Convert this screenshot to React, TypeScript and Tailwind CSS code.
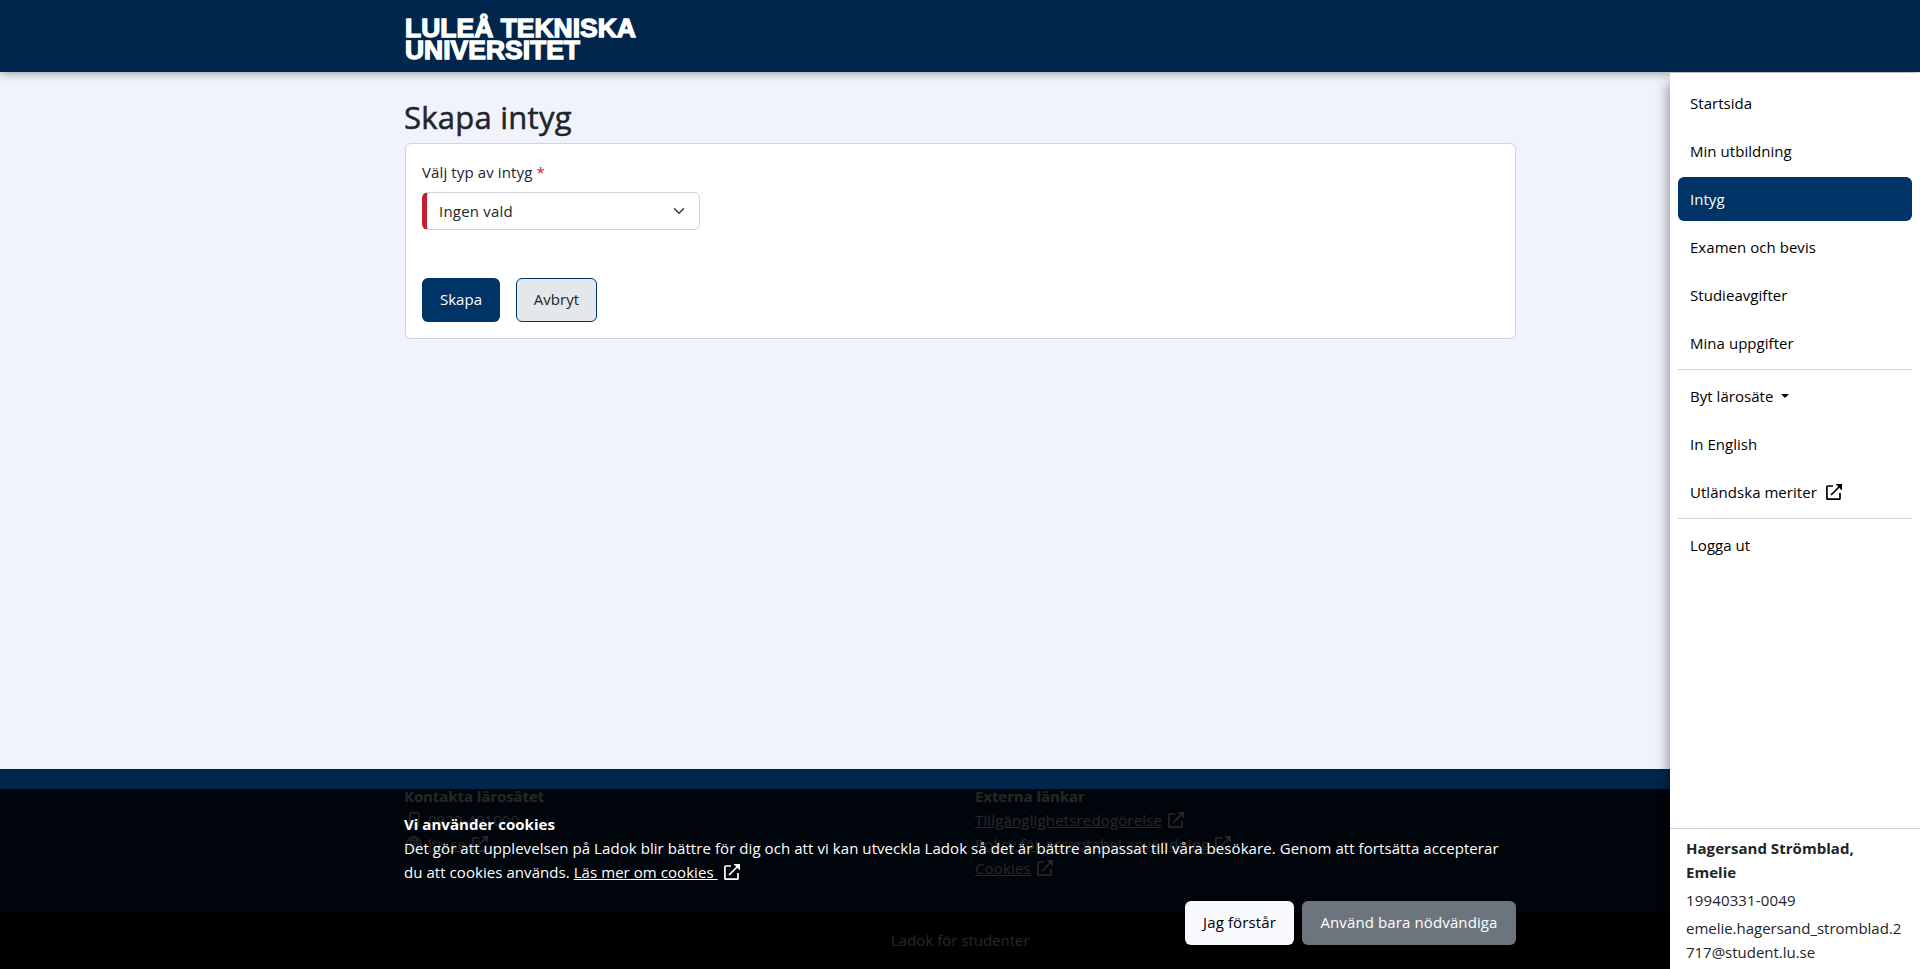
import React from "react";

function Ext({ className = "" }: { className?: string }) {
  return (
    <svg viewBox="0 0 16 16" className={"h-4 w-4 shrink-0 " + className} fill="none" stroke="currentColor" strokeWidth="1.7">
      <path d="M7 2H1.6a.7.7 0 0 0-.7.7v11.7a.7.7 0 0 0 .7.7h11.7a.7.7 0 0 0 .7-.7V9" />
      <path d="M5 11 14 2" />
      <path d="M9.5 0H16v6.5L13.7 4.3 11.8 2.3z" fill="currentColor" stroke="none" />
    </svg>
  );
}

function Item({ children, active = false }: { children: React.ReactNode; active?: boolean }) {
  return (
    <a className={"flex h-11 items-center rounded-md px-3 pb-px " + (active ? "bg-[#003366] text-white" : "text-black")}>
      {children}
    </a>
  );
}

export default function App() {
  return (
    <div className="flex h-[969px] w-full flex-col overflow-hidden bg-[#f0f3fb] font-['Open_Sans','Noto_Sans',sans-serif] text-[15px] leading-6 tracking-[0.04px] text-[#212529]">
      <header className="relative z-10 h-[72px] shrink-0 bg-[#00264c] pl-[405px] shadow-[0_0_10px_rgba(0,0,0,0.45)]">
        <svg width="240" height="72" className="block fill-white font-['Liberation_Sans',Arial,sans-serif] text-[25.5px] font-bold" stroke="#fff" strokeWidth="1.3">
          <text x="0" y="36.5" textLength="231" lengthAdjust="spacingAndGlyphs">LULEÅ TEKNISKA</text>
          <text x="0" y="58.5" textLength="175" lengthAdjust="spacingAndGlyphs">UNIVERSITET</text>
        </svg>
      </header>
      <div className="flex min-h-0 flex-1">
        <main className="relative flex flex-1 flex-col">
          <div className="flex-1 pt-[26px] pl-[404px]">
            <h1 className="h-[38px] text-[31px] leading-[38px] font-medium tracking-[0.25px] [-webkit-text-stroke:0.5px_#212529]">Skapa intyg</h1>
            <section className="mt-[7px] ml-px h-[196px] w-[1111px] rounded-md border border-[#d0d3d8] bg-white px-4 pt-4">
              <label className="block tracking-[0.12px]">Välj typ av intyg <span className="text-[#c32033]">*</span></label>
              <div className="mt-2 flex h-[38px] w-[278px] items-center rounded-md border border-l-[5px] border-[#ced4da] border-l-[#c32033] pr-[14px] pl-3">
                <span className="flex-1 pb-px tracking-[0.2px]">Ingen vald</span>
                <svg viewBox="0 0 16 16" className="h-3 w-3" fill="none" stroke="#343a40" strokeWidth="2" strokeLinecap="round" strokeLinejoin="round"><path d="m2 5 6 6 6-6" /></svg>
              </div>
              <div className="mt-12 flex gap-4">
                <button className="h-11 w-[78px] rounded-md bg-[#003366] pb-0.5 text-white">Skapa</button>
                <button className="h-11 w-[81px] rounded-md border border-[#003366] bg-[#e4e8ec] pb-0.5">Avbryt</button>
              </div>
            </section>
          </div>
          <footer className="flex h-[200px] flex-col bg-[#00264c] text-white">
            <div className="flex h-[144px] pt-[15px] pl-[404px]">
              <div className="w-[571px]">
                <div className="font-bold tracking-[-0.08px]">Kontakta lärosätet</div>
                <div className="flex items-center">
                  <svg viewBox="0 0 16 16" className="mr-1.5 ml-[2px] h-4 w-4" fill="none" stroke="currentColor" strokeWidth="1.4"><rect x="3.7" y=".7" width="9" height="14.6" rx="1" /><path d="M7 13h2.5" /></svg>
                  0920-491000
                </div>
                <div className="flex items-center">
                  <svg viewBox="0 0 16 16" className="mr-1.5 ml-[2px] h-4 w-4" fill="none" stroke="currentColor" strokeWidth="1.1"><circle cx="8" cy="8" r="7.3" /><ellipse cx="8" cy="8" rx="3.5" ry="7.3" /><path d="M8 .7v14.6M.7 8h14.6M2 4.3h12M2 11.7h12" /></svg>
                  <span className="mr-1.5 underline">ltu.se</span>
                  <Ext />
                </div>
              </div>
              <div className="tracking-[0.15px]">
                <div className="font-bold tracking-[-0.08px]">Externa länkar</div>
                <div className="flex items-center gap-1.5"><span className="underline">Tillgänglighetsredogörelse</span><Ext /></div>
                <div className="flex items-center gap-1.5"><span className="underline">Policy för acceptabel användning</span><Ext /></div>
                <div className="flex items-center gap-1.5"><span className="underline">Cookies</span><Ext /></div>
              </div>
            </div>
            <div className="h-14 bg-black pt-[15px] pl-[891px] tracking-normal">Ladok för studenter</div>
          </footer>
          <div className="absolute inset-x-0 bottom-0 h-[180px] bg-black/85 pt-[23px] pl-[404px] text-white">
            <div className="w-[1112px]">
              <div className="font-bold">Vi använder cookies</div>
              <div className="whitespace-nowrap tracking-[0.07px]">Det gör att upplevelsen på Ladok blir bättre för dig och att vi kan utveckla Ladok så det är bättre anpassat till våra besökare. Genom att fortsätta accepterar</div>
              <div className="flex items-center whitespace-pre tracking-[0.06px]">du att cookies används. <span className="mr-1.5 underline">Läs mer om cookies </span><Ext /></div>
              <div className="mt-[17px] flex justify-end gap-2">
                <button className="h-11 w-[109px] rounded-md bg-[#f8f9fc] pb-0.5 tracking-[0.12px] text-black">Jag förstår</button>
                <button className="h-11 w-[214px] rounded-md bg-[#6c757d] pb-0.5 tracking-[0.12px] text-white">Använd bara nödvändiga</button>
              </div>
            </div>
          </div>
        </main>
        <aside className="relative z-20 mt-px flex w-[250px] flex-col bg-white shadow-[-6px_6px_12px_-4px_rgba(0,0,0,0.4)]">
          <nav className="flex flex-1 flex-col gap-1 px-2 pt-2">
            <Item>Startsida</Item>
            <Item>Min utbildning</Item>
            <Item active>Intyg</Item>
            <Item>Examen och bevis</Item>
            <Item>Studieavgifter</Item>
            <Item>Mina uppgifter</Item>
            <hr className="border-[#d0d0d0]" />
            <Item>Byt lärosäte<span className="ml-2 border-x-4 border-t-4 border-x-transparent border-t-black" /></Item>
            <Item>In English</Item>
            <Item>Utländska meriter<Ext className="ml-[9px]" /></Item>
            <hr className="border-[#d0d0d0]" />
            <Item>Logga ut</Item>
          </nav>
          <div className="h-[141px] border-t border-[#c9cedb] px-4 pt-[7px]">
            <div className="font-bold">Hagersand Strömblad,<br />Emelie</div>
            <div className="mt-1 tracking-[0.15px]">19940331-0049</div>
            <div className="mt-1 whitespace-nowrap tracking-[-0.02px]">emelie.hagersand_stromblad.2<br />717@student.lu.se</div>
          </div>
        </aside>
      </div>
    </div>
  );
}
